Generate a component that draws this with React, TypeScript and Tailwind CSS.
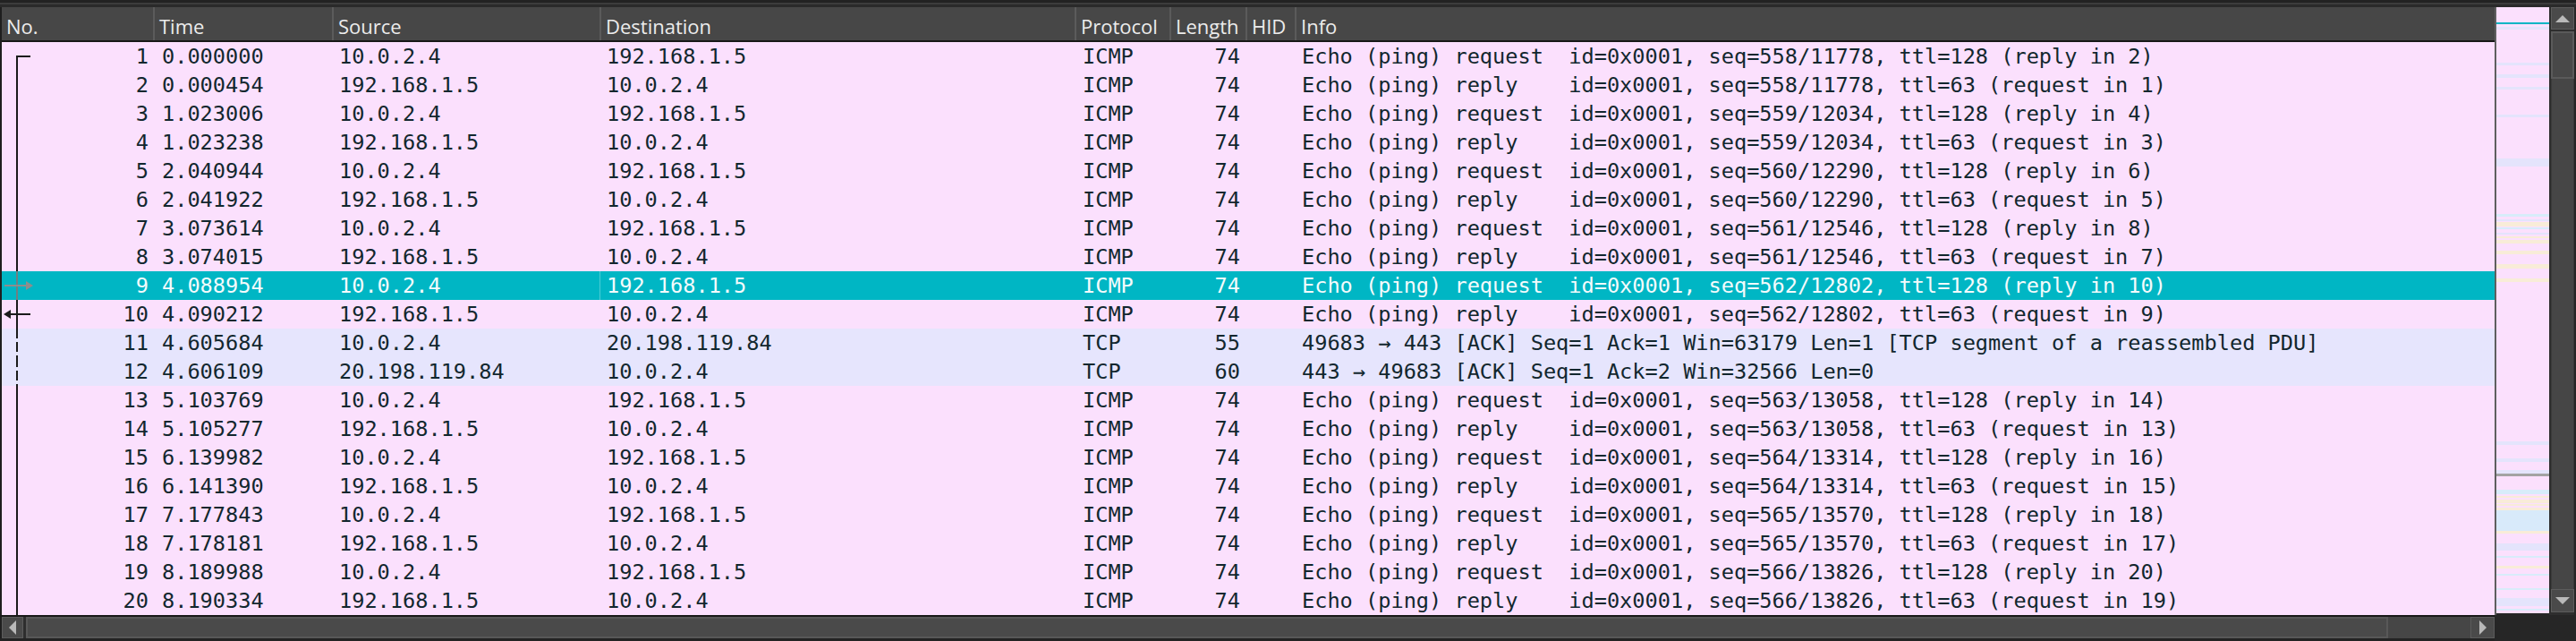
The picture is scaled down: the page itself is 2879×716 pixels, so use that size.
type Packet = {
    no: number;
    time: string;
    src: string;
    dst: string;
    proto: string;
    len: number;
    info: string;
};

const A = "10.0.2.4";
const B = "192.168.1.5";
const C = "20.198.119.84";

// ping pairs: [time req, time reply, seq]
const pings: [string, string, string][] = [
    ["0.000000", "0.000454", "558/11778"],
    ["1.023006", "1.023238", "559/12034"],
    ["2.040944", "2.041922", "560/12290"],
    ["3.073614", "3.074015", "561/12546"],
    ["4.088954", "4.090212", "562/12802"],
    ["5.103769", "5.105277", "563/13058"],
    ["6.139982", "6.141390", "564/13314"],
    ["7.177843", "7.178181", "565/13570"],
    ["8.189988", "8.190334", "566/13826"],
];

function buildPackets(): Packet[] {
    const out: Packet[] = [];
    let no = 1;
    pings.forEach(([t1, t2, seq], idx) => {
        if (idx === 5) {
            out.push({ no: no++, time: "4.605684", src: A, dst: C, proto: "TCP", len: 55, info: "49683 → 443 [ACK] Seq=1 Ack=1 Win=63179 Len=1 [TCP segment of a reassembled PDU]" });
            out.push({ no: no++, time: "4.606109", src: C, dst: A, proto: "TCP", len: 60, info: "443 → 49683 [ACK] Seq=1 Ack=2 Win=32566 Len=0" });
        }
        const req = no;
        out.push({ no: no++, time: t1, src: A, dst: B, proto: "ICMP", len: 74, info: `Echo (ping) request  id=0x0001, seq=${seq}, ttl=128 (reply in ${req + 1})` });
        out.push({ no: no++, time: t2, src: B, dst: A, proto: "ICMP", len: 74, info: `Echo (ping) reply    id=0x0001, seq=${seq}, ttl=63 (request in ${req})` });
    });
    return out;
}

const packets = buildPackets();
const SELECTED = 9;

// overview stripes: [top, height, colour] relative to the minimap top (y=8)
const stripes: [number, number, string][] = [
    [17, 2, "#00b6c4"],
    [22, 3, "#e4e4fc"],
    [62, 3, "#e4e4fc"],
    [75, 4, "#e4e4fc"],
    [89, 3, "#e4e4fc"],
    [120, 3, "#e4e4fc"],
    [169, 9, "#e4e4fc"],
    [231, 3, "#d8ecfa"],
    [237, 2, "#e4e4fc"],
    [240, 5, "#f8ecd8"],
    [246, 2, "#d8ecfa"],
    [252, 2, "#e4e4fc"],
    [256, 2, "#f8ecd8"],
    [260, 4, "#f8ecd8"],
    [272, 4, "#f8ecd8"],
    [287, 5, "#f8ecd8"],
    [303, 4, "#f8ecd8"],
    [485, 4, "#e4e4fc"],
    [504, 4, "#e4e4fc"],
    [517, 4, "#e4e4fc"],
    [521, 3, "#a3a3a3"],
    [539, 5, "#d8ecfa"],
    [546, 2, "#f8ecd8"],
    [550, 4, "#f8ecd8"],
    [555, 2, "#f8ecd8"],
    [559, 3, "#f8ecd8"],
    [562, 23, "#d8eafa"],
    [585, 3, "#f8ecd8"],
    [599, 8, "#e4e4fc"],
    [613, 2, "#d8ecfa"],
    [624, 3, "#f8ecd8"],
    [633, 2, "#d8ecfa"],
    [649, 2, "#d8ecfa"],
    [660, 9, "#e4e4fc"],
    [672, 2, "#d8ecfa"],
];

function Thread({ no }: { no: number }) {
    const dark = "#1b1b1b";
    const dashed = no === 11 || no === 12;
    return (
        <svg width="40" height="32" className="shrink-0">
            {no === 1 ? (
                <>
                    <line x1="17" y1="16" x2="17" y2="32" stroke={dark} strokeWidth="2" />
                    <line x1="16" y1="16" x2="32" y2="16" stroke={dark} strokeWidth="2" />
                </>
            ) : (
                <line
                    x1="17"
                    y1="0"
                    x2="17"
                    y2="32"
                    stroke={no === SELECTED ? "#6f7f82" : dark}
                    strokeWidth="2"
                    strokeDasharray={dashed ? "11 4" : undefined}
                />
            )}
            {no === SELECTED && (
                <>
                    <line x1="3" y1="16" x2="30" y2="16" stroke="#8d8d8d" strokeWidth="2" />
                    <polygon points="27,11 35,16 27,21" fill="#8d8d8d" />
                </>
            )}
            {no === SELECTED + 1 && (
                <>
                    <line x1="8" y1="16" x2="32" y2="16" stroke={dark} strokeWidth="2" />
                    <polygon points="10,11 2,16 10,21" fill={dark} />
                </>
            )}
        </svg>
    );
}

function HeaderCell({ title, w, first }: { title: string; w: string; first?: boolean }) {
    return (
        <div className={`${w} h-full flex items-center pt-[5px] shrink-0 ${first ? "pl-[5px]" : "pl-[5px] border-l-2 border-[#5b5b5b]"}`}>
            {title}
        </div>
    );
}

function Row({ p }: { p: Packet }) {
    const selected = p.no === SELECTED;
    const bg = selected ? "bg-[#00b6c4] text-[#f4fbfc]" : p.proto === "TCP" ? "bg-[#e6e5fd] text-[#12272e]" : "bg-[#fbe0fd] text-[#12272e]";
    return (
        <div className={`flex h-[32px] leading-[32px] whitespace-pre ${bg}`}>
            <div className="w-[169px] shrink-0 flex items-center">
                <Thread no={p.no} />
                <span className="ml-auto pr-[5px]">{p.no}</span>
            </div>
            <div className="w-[200px] shrink-0 pl-[10px]">{p.time}</div>
            <div className="w-[299px] shrink-0 pl-[8px]">{p.src}</div>
            <div className={`w-[531px] shrink-0 pl-[7px] ${selected ? "border-l border-[#4ccdd6]" : "border-l border-transparent"}`}>{p.dst}</div>
            <div className="w-[106px] shrink-0 pl-[9px]">{p.proto}</div>
            <div className="w-[85px] shrink-0 text-right pr-[6px]">{p.len}</div>
            <div className="w-[55px] shrink-0"></div>
            <div className="flex-1 pl-[8px] overflow-hidden">{p.info}</div>
        </div>
    );
}

function Triangle({ dir }: { dir: "up" | "down" | "left" | "right" }) {
    const pts = {
        up: "2,11 10,3 18,11",
        down: "2,3 10,11 18,3",
        left: "11,2 3,10 11,18",
        right: "3,2 11,10 3,18",
    }[dir];
    const vertical = dir === "up" || dir === "down";
    return (
        <svg width={vertical ? 20 : 14} height={vertical ? 14 : 20}>
            <polygon points={pts} fill="#b9b9b9" />
        </svg>
    );
}

export default function App() {
    return (
        <div className="w-[2879px] h-[716px] bg-[#272727] flex flex-col overflow-hidden">
            <div className="h-[8px] shrink-0 flex flex-col">
                <div className="h-[3px] bg-[#222222]"></div>
                <div className="h-[2px] bg-[#3c3c3c]"></div>
                <div className="h-[3px] bg-[#2a2a2a]"></div>
            </div>
            <div className="flex h-[679px] shrink-0">
                <div className="w-[2px] bg-[#1e1e1e] shrink-0"></div>
                <div className="w-[2786px] shrink-0 flex flex-col">
                    <div
                        className="flex h-[39px] shrink-0 bg-[#474747] border-b-2 border-[#181818] text-[22px] text-[#ececec]"
                        style={{ fontFamily: "'Open Sans', 'Noto Sans', sans-serif" }}
                    >
                        <HeaderCell title="No." w="w-[169px]" first />
                        <HeaderCell title="Time" w="w-[200px]" />
                        <HeaderCell title="Source" w="w-[299px]" />
                        <HeaderCell title="Destination" w="w-[531px]" />
                        <HeaderCell title="Protocol" w="w-[106px]" />
                        <HeaderCell title="Length" w="w-[85px]" />
                        <HeaderCell title="HID" w="w-[55px]" />
                        <HeaderCell title="Info" w="flex-1" />
                    </div>
                    <div className="flex flex-col text-[23.6px]" style={{ fontFamily: "'DejaVu Sans Mono', monospace" }}>
                        {packets.map((p) => (
                            <Row p={p} key={p.no} />
                        ))}
                    </div>
                </div>
                <div className="w-[2px] bg-[#5f5f5f] shrink-0"></div>
                <div className="w-[59px] shrink-0 bg-[#fbe0fd] h-[677px]">
                    <svg width="59" height="677">
                        {stripes.map(([y, h, c], i) => (
                            <rect key={i} x="0" y={y} width="59" height={h} fill={c} />
                        ))}
                    </svg>
                </div>
                <div className="w-[2px] bg-[#2e2e2e] shrink-0"></div>
                <div className="w-[26px] shrink-0 flex flex-col bg-[#2e2e2e]">
                    <div className="h-[25px] bg-[#4a4a4a] border border-[#5c5c5c] flex items-center justify-center">
                        <Triangle dir="up" />
                    </div>
                    <div className="h-[53px] mt-[2px] bg-[#484848] border-2 border-[#5a5a5a]"></div>
                    <div className="flex-1 bg-[#464646] border-x border-[#3a3a3a]"></div>
                    <div className="h-[26px] bg-[#4a4a4a] border border-[#5c5c5c] flex items-center justify-center">
                        <Triangle dir="down" />
                    </div>
                    <div className="h-[3px]"></div>
                </div>
                <div className="w-[2px] bg-[#262626] shrink-0"></div>
            </div>
            <div className="flex h-[29px] shrink-0">
                <div className="w-[2788px] shrink-0 flex flex-col">
                    <div className="h-[2px] bg-[#181818]"></div>
                    <div className="h-[24px] flex bg-[#3e3e3e]">
                        <div className="w-[2px] bg-[#1e1e1e]"></div>
                        <div className="w-[24px] bg-[#4a4a4a] border border-[#5c5c5c] flex items-center justify-center">
                            <Triangle dir="left" />
                        </div>
                        <div className="w-[3px] bg-[#2e2e2e]"></div>
                        <div className="w-[2640px] bg-[#4a4a4a] border-2 border-[#585858]"></div>
                        <div className="flex-1 bg-[#464646]"></div>
                        <div className="w-[27px] bg-[#4a4a4a] border border-[#5c5c5c] flex items-center justify-center">
                            <Triangle dir="right" />
                        </div>
                    </div>
                    <div className="flex-1 bg-[#232323]"></div>
                </div>
                <div className="flex-1 bg-[#262626]"></div>
            </div>
        </div>
    );
}
